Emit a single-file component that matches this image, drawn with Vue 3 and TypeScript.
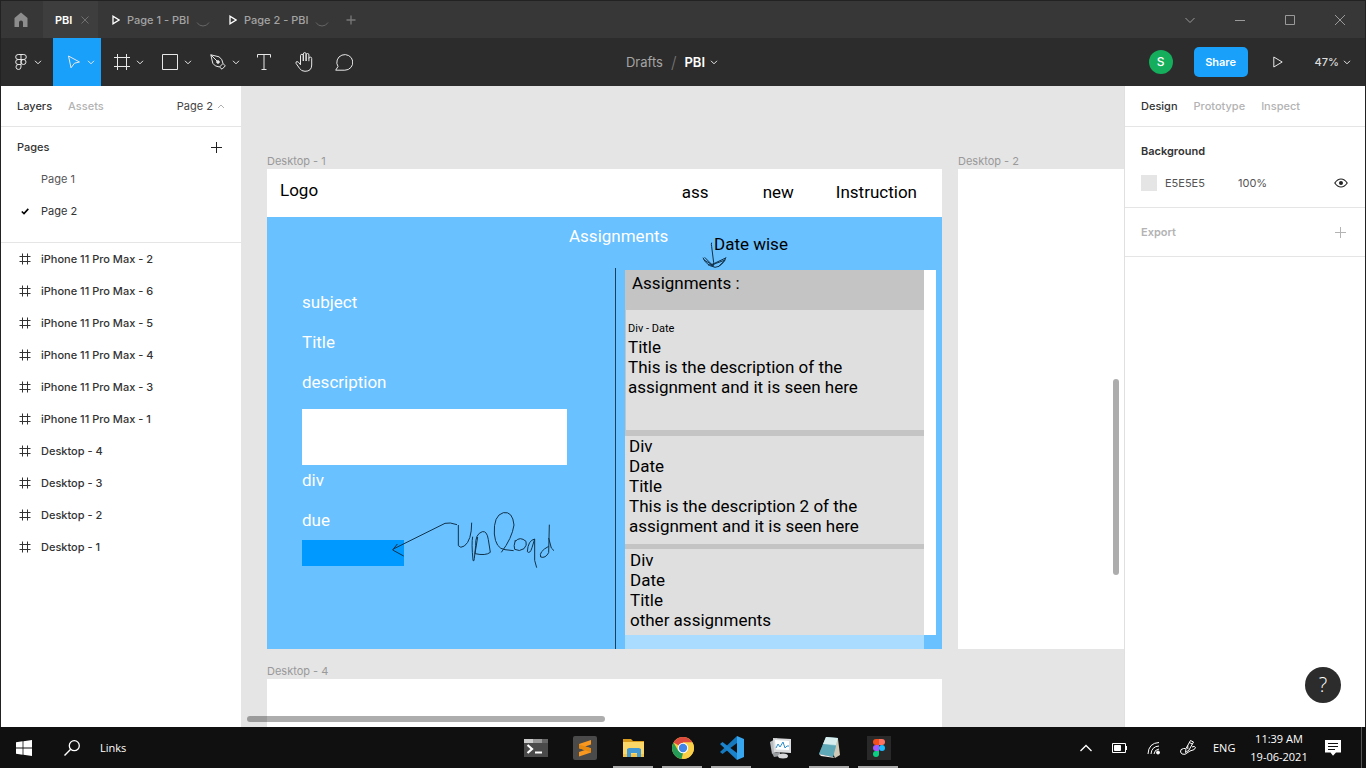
<script setup lang="ts">
import { ref } from 'vue'

interface Entry {
  lines: string[]
  small?: string
  kind: string
}

const fileTabs = ['Page 1 - PBI', 'Page 2 - PBI']
const pages = ['Page 1', 'Page 2']
const currentPage = ref('Page 2')

const layers = [
  'iPhone 11 Pro Max - 2',
  'iPhone 11 Pro Max - 6',
  'iPhone 11 Pro Max - 5',
  'iPhone 11 Pro Max - 4',
  'iPhone 11 Pro Max - 3',
  'iPhone 11 Pro Max - 1',
  'Desktop - 4',
  'Desktop - 3',
  'Desktop - 2',
  'Desktop - 1',
]

const inspectorTabs = ['Design', 'Prototype', 'Inspect']
const activeInspector = ref('Design')

const entries: Entry[] = [
  {
    kind: 'first',
    small: 'Div - Date',
    lines: ['Title', 'This is the description of the', 'assignment and it is seen here'],
  },
  {
    kind: 'second',
    lines: ['Div', 'Date', 'Title', 'This is the description 2 of the', 'assignment and it is seen here'],
  },
  { kind: 'third', lines: ['Div', 'Date', 'Title', 'other assignments'] },
]
</script>

<template>
  <div class="desktop">
    <div class="window">
      <header class="titlebar">
        <button class="home" aria-label="Home">
          <svg width="14" height="16" viewBox="0 0 14 16"><path d="M7 .5 13.5 6v9H9v-4.500a2 2 0 0 0-4 0V15H.5V6z" fill="#8d8d8d" /></svg>
        </button>
        <div class="tab active">
          <span>PBI</span>
          <button class="close" aria-label="Close tab">
            <svg width="8" height="8" viewBox="0 0 8 8"><path d="M.5.5l7 7M7.500.5l-7 7" stroke="#707070" fill="none" /></svg>
          </button>
        </div>
        <div v-for="t in fileTabs" :key="t" class="tab">
          <svg width="8" height="10" viewBox="0 0 8 10"><path d="M1 1.200v7.600L7 5z" stroke="#fff" stroke-width="1.300" fill="none" /></svg>
          <span>{{ t }}</span>
          <svg class="spin" width="14" height="14" viewBox="0 0 14 14"><path d="M1 9.500q2 3.500 6 3.500t6-3.500" stroke="#666" fill="none" /></svg>
        </div>
        <button class="newtab" aria-label="New tab">
          <svg width="10" height="10" viewBox="0 0 10 10"><path d="M5 .5v9M.5 5h9" stroke="#787878" stroke-width="1.300" /></svg>
        </button>
        <div class="controls">
          <button aria-label="More"><svg width="10" height="10" viewBox="0 0 10 10"><path d="M.5 3 5 7.500 9.500 3" /></svg></button>
          <button aria-label="Minimise"><svg width="10" height="10" viewBox="0 0 10 10"><path d="M0 5.500h10" /></svg></button>
          <button aria-label="Maximise"><svg width="10" height="10" viewBox="0 0 10 10"><path d="M.5.5h9v9h-9z" /></svg></button>
          <button aria-label="Close"><svg width="10" height="10" viewBox="0 0 10 10"><path d="M0 0l10 10M10 0 0 10" /></svg></button>
        </div>
      </header>

      <div class="toolbar">
        <nav class="tools" aria-label="Tools">
          <button class="tool menu" aria-label="Main menu">
            <svg width="12" height="16" viewBox="0 0 12 16"><path d="M6 .5H3.200a2.500 2.500 0 0 0 0 5H6zM6 .5h2.800a2.500 2.500 0 0 1 0 5H6M6 5.500H3.200a2.500 2.500 0 0 0 0 5H6zM6 10.500H3.200a2.500 2.500 0 1 0 2.800 2.500zM8.700 5.500a2.500 2.500 0 1 1-2.700 2.500 2.500 2.500 0 0 1 2.700-2.500z" /></svg>
            <svg class="chev" width="8" height="5" viewBox="0 0 8 5"><path d="M1 .8l3 3 3-3" /></svg>
          </button>
          <button class="tool active" aria-label="Move">
            <svg width="14" height="14" viewBox="0 0 14 14"><path d="M1.500 1 12.500 7 7.500 8.200 4 12.800z" /></svg>
            <svg class="chev" width="8" height="5" viewBox="0 0 8 5"><path d="M1 .8l3 3 3-3" /></svg>
          </button>
          <button class="tool" aria-label="Frame">
            <svg width="16" height="16" viewBox="0 0 16 16"><path d="M3.500 0v16M12.500 0v16M0 3.500h16M0 12.500h16" /></svg>
            <svg class="chev" width="8" height="5" viewBox="0 0 8 5"><path d="M1 .8l3 3 3-3" /></svg>
          </button>
          <button class="tool" aria-label="Rectangle">
            <svg width="16" height="16" viewBox="0 0 16 16"><path d="M.5.5h15v15H.5z" /></svg>
            <svg class="chev" width="8" height="5" viewBox="0 0 8 5"><path d="M1 .8l3 3 3-3" /></svg>
          </button>
          <button class="tool" aria-label="Pen">
            <svg width="16" height="16" viewBox="0 0 16 16"><path d="M.8.8 9 2.800q3.500 2 4 6.700l-3.500 3.500Q4.500 12.600 2.800 9.300zM.8.8l6.300 6.300M13 9.500l2.300 2.400-3.300 3.300L9.500 13" /><circle cx="8" cy="8" r="1.300" fill="#e8e8e8" /></svg>
            <svg class="chev" width="8" height="5" viewBox="0 0 8 5"><path d="M1 .8l3 3 3-3" /></svg>
          </button>
          <button class="tool narrow" aria-label="Text">
            <svg width="14" height="16" viewBox="0 0 14 16"><path d="M.5 3.500v-3h13v3M7 .5v15M4.500 15.500h5" /></svg>
          </button>
          <button class="tool narrow" aria-label="Hand">
            <svg width="18" height="20" viewBox="0 0 18 20"><path d="M5.500 11V3.700a1.400 1.400 0 0 1 2.800 0V9M8.300 9V2a1.400 1.400 0 0 1 2.800 0V9M11.100 9V2.900a1.400 1.400 0 0 1 2.800 0v6.300M13.900 6.500a1.400 1.400 0 0 1 2.800 0V13q0 6.300-6.700 6.300-3.800 0-5.500-3L1 11.300Q.6 9.800 2 9.500q1.300 0 3.500 3.300V9" /></svg>
          </button>
          <button class="tool narrow" aria-label="Comment">
            <svg width="18" height="17" viewBox="0 0 18 17"><path d="M.7 16.200 3 12.500A8 7.800 0 1 1 9.800 16.200z" /></svg>
          </button>
        </nav>
        <div class="filename">
          <a href="#">Drafts</a>
          <span class="slash">/</span>
          <button>PBI <svg class="chev" width="8" height="5" viewBox="0 0 8 5"><path d="M1 .8l3 3 3-3" /></svg></button>
        </div>
        <div class="actions">
          <span class="avatar">S</span>
          <button class="share">Share</button>
          <button class="play" aria-label="Present">
            <svg width="10" height="12" viewBox="0 0 10 12"><path d="M.8 1v10L9.200 6z" /></svg>
          </button>
          <button class="zoom">47% <svg class="chev" width="8" height="5" viewBox="0 0 8 5"><path d="M1 .8l3 3 3-3" /></svg></button>
        </div>
      </div>

      <div class="main">
        <aside class="left">
          <div class="panel-tabs">
            <button class="on">Layers</button>
            <button>Assets</button>
            <button class="pagepick">Page 2 <svg width="8" height="5" viewBox="0 0 8 5"><path d="M1 4l3-3 3 3" fill="none" stroke="#b0b0b0" /></svg></button>
          </div>
          <section class="pages">
            <div class="pages-head">
              <h2>Pages</h2>
              <button aria-label="Add page"><svg width="11" height="11" viewBox="0 0 11 11"><path d="M5.500 0v11M0 5.500h11" stroke="#222" /></svg></button>
            </div>
            <button v-for="p in pages" :key="p" class="page" :class="{ current: p === currentPage }" @click="currentPage = p">
              <span class="mark"><svg v-if="p === currentPage" width="8" height="7" viewBox="0 0 8 7"><path d="M.8 3.500 3 5.600 7.300.9" stroke="#000" stroke-width="1.600" fill="none" /></svg></span>
              {{ p }}
            </button>
          </section>
          <ul class="layers">
            <li v-for="l in layers" :key="l">
              <svg width="12" height="12" viewBox="0 0 12 12"><path d="M3.500.5v11M8.500.5v11M.5 3.500h11M.5 8.500h11" stroke="#333" /></svg>
              {{ l }}
            </li>
          </ul>
        </aside>

        <main class="canvas">
          <div class="node desk1">
            <div class="label">Desktop - 1</div>
            <div class="frame">
              <div class="site-head">
                <span class="logo">Logo</span>
                <span>ass</span>
                <span class="middle">new</span>
                <span>Instruction</span>
              </div>
              <div class="site-body">
                <div class="site-title">Assignments</div>
                <div class="cols">
                  <div class="form">
                    <p>subject</p>
                    <p>Title</p>
                    <p>description</p>
                    <div class="box"></div>
                    <p>div</p>
                    <p>due</p>
                    <div class="btn"></div>
                  </div>
                  <div class="listing">
                    <div class="list">
                      <div class="list-head">Assignments :</div>
                      <div v-for="e in entries" :key="e.kind" class="entry" :class="e.kind">
                        <p v-if="e.small" class="small">{{ e.small }}</p>
                        <p v-for="line in e.lines" :key="line">{{ line }}</p>
                      </div>
                    </div>
                    <div class="strip"></div>
                    <div class="tail"></div>
                  </div>
                </div>
              </div>
              <div class="note">Date wise</div>
              <svg class="arrow" viewBox="300 240 90 90">
                <path d="M335 248q-2 4 0 12l6 48-2 12M309 293q8 22 36 29 22-2 33-30M311 299l28 17M325 316l14-4 38-18M332 318l16-8 28-10-22 21M314 292l27 27" />
              </svg>
              <svg class="sketch" viewBox="330 360 510 180">
                <path d="M531 404l-20-5-16 1L340 477M352 462l-14 18 33 18M535 405v62q6 9 18 1 22-16 22-70M578 440q-4 20 1 70 2 8 4-5l4-38q-2-35 20-42 14-3 18 24l6 38q-14 11-46 4l8-50M664 487q32-42 38-82-4-42-32-37-30 8-27 64 4 44 32 47l26 3M706 450q-6 20-2 28 14 8 28-2 10-10 6-22-18-16-32 0M764 447q-20 4-22 38 8 8 14-12l8-26v64l6 22M808 404l-2 84q-10 18-24 13-6-16 24-32M806 444l8 30 8 8" />
              </svg>
            </div>
          </div>
          <div class="node desk2">
            <div class="label">Desktop - 2</div>
            <div class="frame"></div>
          </div>
          <div class="node desk4">
            <div class="label">Desktop - 4</div>
            <div class="frame"></div>
          </div>
          <div class="bar-h"></div>
          <div class="bar-v"></div>
        </main>

        <aside class="right">
          <div class="panel-tabs">
            <button v-for="t in inspectorTabs" :key="t" :class="{ on: t === activeInspector }" @click="activeInspector = t">{{ t }}</button>
          </div>
          <section class="background">
            <h2>Background</h2>
            <div class="fill">
              <span class="swatch"></span>
              <input class="hex" aria-label="Background colour" value="E5E5E5" />
              <input class="opacity" aria-label="Opacity" value="100%" />
              <button aria-label="Toggle visibility">
                <svg width="14" height="10" viewBox="0 0 14 10"><path d="M.8 5Q3.500 1 7 1t6.200 4Q10.500 9 7 9T.8 5z" fill="none" stroke="#222" stroke-width="1.200" /><circle cx="7" cy="5" r="2" fill="#222" /></svg>
              </button>
            </div>
          </section>
          <section class="export">
            <h2>Export</h2>
            <button aria-label="Add export"><svg width="11" height="11" viewBox="0 0 11 11"><path d="M5.500 0v11M0 5.500h11" stroke="#b3b3b3" /></svg></button>
          </section>
          <button class="help" aria-label="Help">?</button>
        </aside>
      </div>
    </div>

    <footer class="taskbar">
      <div class="start">
        <button aria-label="Start">
          <svg width="16" height="16" viewBox="0 0 16 16"><path d="M0 2.200 6.600 1.300v6.300H0zM7.400 1.200 16 0v7.600H7.400zM0 8.400h6.600v6.300L0 13.800zM7.400 8.400H16V16l-8.600-1.200z" fill="#fff" /></svg>
        </button>
        <button aria-label="Search">
          <svg width="16" height="16" viewBox="0 0 16 16"><circle cx="10.300" cy="5.700" r="5" fill="none" stroke="#fff" stroke-width="1.300" /><path d="M6.700 9.300.5 15.500" stroke="#fff" stroke-width="1.400" /></svg>
        </button>
        <span>Links</span>
      </div>
      <div class="apps">
        <button aria-label="Terminal">
          <svg width="24" height="24" viewBox="0 0 24 24"><path d="M0 3h24v18H0z" fill="#4a4a4a" /><path d="M0 3h9v4H0z" fill="#ccc" /><path d="M9 3h9v4H9z" fill="#999" /><path d="M18 3h6v4h-6z" fill="#666" /><path d="M3.500 9 8 13l-4.500 4" stroke="#fff" stroke-width="2.200" fill="none" /><path d="M11 16.500h7" stroke="#fff" stroke-width="2" /></svg>
        </button>
        <button aria-label="Sublime Text">
          <svg width="24" height="24" viewBox="0 0 24 24"><rect width="24" height="24" rx="2" fill="#4a4a4a" /><path d="M18 4v4.500l-6 2 6 1.800v4.200L6 20.500V16l6-2-6-1.800V8z" fill="#f89820" /><path d="M6 8.500v3.700l12 4v-3.900z" fill="#e8890f" /></svg>
        </button>
        <button class="open" aria-label="File Explorer">
          <svg width="24" height="24" viewBox="0 0 24 24"><path d="M1 3h8l2 2h11v4H1z" fill="#d99b1c" /><path d="M1 6h21v15H1z" fill="#fbd768" /><path d="M1 18h21v3H1z" fill="#f3c44a" /><path d="M5 21v-8l2-1h10l2 1v8h-4v-4H9v4z" fill="#4299d4" /></svg>
        </button>
        <button class="open" aria-label="Chrome">
          <svg width="24" height="24" viewBox="0 0 24 24"><circle cx="12" cy="12" r="11" fill="#f9cd3c" /><path d="M12 12 2.500 6.500A11 11 0 0 1 21.500 6.500H12z" fill="#dd4b3e" /><path d="M2.500 6.500 7.200 14.700 12 17l-1.500 6A11 11 0 0 1 2.500 6.500z" fill="#249b56" /><path d="M21.500 6.500H12l5 8-5 8.500a11 11 0 0 0 9.500-16.500z" fill="#fad04a" /><circle cx="12" cy="12" r="5.200" fill="#fff" /><circle cx="12" cy="12" r="4.200" fill="#4285e8" /></svg>
        </button>
        <button class="open" aria-label="Visual Studio Code">
          <svg width="24" height="24" viewBox="0 0 24 24"><path d="M17 0v7L2.500 18 0 16z" fill="#1678bd" /><path d="M0 8l2.500-2L17 17v7z" fill="#1b83cc" /><path d="M17 0l7 3v18l-7 3z" fill="#38a6ee" /></svg>
        </button>
        <button aria-label="Performance Monitor">
          <svg width="24" height="24" viewBox="0 0 24 24"><path d="M1 6l7-4 2 13-7 3z" fill="#b9bdc0" /><path d="M4 2 22 3v14l-17-1z" fill="#dadcdd" /><path d="M6 4l14 1v9L7 13.500z" fill="#fff" /><path d="M7 12l2-4 2 3 3-5 2 6 2-2h2" stroke="#2e8fce" fill="none" /><path d="M3 17l8-1v4l-6 1z" fill="#9a9da0" /><ellipse cx="14" cy="20" rx="5" ry="2.500" fill="#d5d6d7" /></svg>
        </button>
        <button class="open" aria-label="Notepad">
          <svg width="24" height="24" viewBox="0 0 24 24"><path d="M8 2l12 1 2 16-5 3z" fill="#cfc9b6" /><path d="M8 1l12 1-5 19-14-3z" fill="#84bfcb" /><path d="M8 1l12 1-2 7-13-1z" fill="#d8eeee" /><path d="M5 8l13 2-3 11-14-3z" fill="#4c9bac" opacity=".65" /><path d="M1 18l14 3 2 1-14-2z" fill="#eee" /></svg>
        </button>
        <button class="open" aria-label="Figma">
          <svg width="24" height="24" viewBox="0 0 24 24"><rect width="24" height="24" fill="#292929" /><path d="M12 3H9a3 3 0 0 0 0 6h3z" fill="#f24e1e" /><path d="M12 3h3a3 3 0 0 1 0 6h-3z" fill="#ff7262" /><path d="M12 9H9a3 3 0 0 0 0 6h3z" fill="#a259ff" /><circle cx="15" cy="12" r="3" fill="#1abcfe" /><path d="M12 15H9a3 3 0 1 0 3 3z" fill="#0acf83" /></svg>
        </button>
      </div>
      <div class="tray">
        <button aria-label="Show hidden icons"><svg width="12" height="8" viewBox="0 0 12 8"><path d="M.5 7 6 1.500 11.500 7" stroke-width="1.300" /></svg></button>
        <button aria-label="Battery"><svg width="16" height="10" viewBox="0 0 16 10"><path d="M.5.500h13v9H.5zM14.500 3v4" /><path d="M2.500 2.500h6v5h-6z" fill="#fff" /></svg></button>
        <button aria-label="Network"><svg width="14" height="14" viewBox="0 0 14 14"><path d="M1 13Q1.500 2 12 1.500M4 13q.5-7.500 8-8M7 13q.5-4.500 5-5" /><circle cx="11" cy="11.500" r="1.500" fill="#fff" /></svg></button>
        <button aria-label="Pen input"><svg width="18" height="17" viewBox="0 0 18 17"><path d="M6.500 13.500 7 9.500 11.500 1.500l3 1.500-4.500 8zM10.300 3.500l3 1.500M8.800 10V6.500M6.500 9.500H4.500Q1 10 1.500 13q1 3 4.500 2.300l5-3.300Q16.500 11 16.500 8.500q-1-2-3.500-.5" /></svg></button>
        <span class="lang">ENG</span>
        <span class="clock">11:39 AM<br />19-06-2021</span>
        <button class="notif" aria-label="Notifications"><svg width="16" height="16" viewBox="0 0 16 16"><path d="M0 0h16v12.500h-5L8 15.800 5.500 12.500H0z" fill="#fff" stroke="none" /><path d="M3 3.500h10M3 6.500h10M3 9.500h7" stroke="#101010" /></svg></button>
        <span class="edge"></span>
      </div>
    </footer>
  </div>
</template>

<style>
body {
  overflow: hidden;
  background: #101010;
}
</style>

<style scoped>
.desktop {
  height: 100vh;
  display: flex;
  flex-direction: column;
  font: 500 11px/16px Inter, "Liberation Sans", sans-serif;
  color: #333;
}
.desktop * {
  box-sizing: border-box;
}
button,
input {
  font: inherit;
  color: inherit;
  background: none;
  border: 0;
  padding: 0;
  margin: 0;
}
button {
  display: flex;
  align-items: center;
  justify-content: center;
}
svg {
  flex: none;
  display: block;
}
h2,
p,
ul {
  margin: 0;
  padding: 0;
  font: inherit;
}
.window {
  flex: 1;
  min-height: 0;
  display: flex;
  flex-direction: column;
  border: 1px solid #222;
  border-bottom: 0;
}

/* title bar */
.titlebar {
  flex: none;
  height: 37px;
  display: flex;
  align-items: stretch;
  background: #373737;
  color: #a3a3a3;
}
.home {
  width: 42px;
  padding-right: 2px;
}
.tab {
  display: flex;
  align-items: center;
  padding-left: 14px;
  white-space: nowrap;
}
.tab.active {
  width: 55px;
  padding-left: 12px;
  gap: 9px;
  background: #3e3e3e;
  color: #fff;
  font-weight: 600;
}
.tab:not(.active) {
  gap: 7px;
  width: 117px;
}
.newtab {
  width: 10px;
  margin-left: 14px;
}
.controls {
  margin-left: auto;
  display: flex;
}
.controls button {
  width: 50px;
}
.controls svg {
  stroke: #9a9a9a;
  fill: none;
}

/* toolbar */
.toolbar {
  flex: none;
  height: 48px;
  display: grid;
  grid-template-columns: 1fr auto 1fr;
  background: #2c2c2c;
  color: #fff;
}
.toolbar svg {
  stroke: #e8e8e8;
  fill: none;
}
.tools {
  display: flex;
}
.tool {
  width: 48px;
  gap: 6px;
  padding-left: 8px;
}
.tool.menu {
  width: 52px;
  gap: 7px;
  padding: 0 0 0 2px;
}
.tool.active {
  background: #18a0fb;
}
.tool.narrow {
  width: 40px;
  padding: 0 2px 0 0;
}
.filename {
  display: flex;
  align-items: center;
  gap: 8px;
  font-size: 13px;
  padding-right: 22px;
}
.filename a {
  color: #a5a5a5;
  font-weight: 400;
  text-decoration: none;
}
.slash {
  font-size: 16px;
  font-weight: 300;
  color: #777;
}
.filename button {
  font-weight: 600;
  gap: 5px;
}
.actions {
  display: flex;
  align-items: center;
  justify-content: flex-end;
  padding-right: 14px;
}
.avatar {
  width: 24px;
  height: 24px;
  border-radius: 50%;
  background: #14ae5c;
  line-height: 24px;
  text-align: center;
  font-size: 12px;
}
.share {
  height: 30px;
  width: 54px;
  margin-left: 21px;
  border-radius: 5px;
  background: #18a0fb;
  font-weight: 600;
}
.play {
  width: 60px;
}
.zoom {
  gap: 4px;
  margin-left: 7px;
  color: #ddd;
}

/* side panels */
.main {
  flex: 1;
  min-height: 0;
  display: flex;
}
.left,
.right {
  flex: none;
  width: 240px;
  background: #fff;
}
.right {
  width: 241px;
  border-left: 1px solid #e0e0e0;
  display: flex;
  flex-direction: column;
}
.panel-tabs {
  display: flex;
  gap: 16px;
  height: 41px;
  padding: 0 16px;
  border-bottom: 1px solid #e5e5e5;
  color: #b3b3b3;
}
.panel-tabs .on {
  color: #333;
}
.panel-tabs .pagepick {
  margin-left: auto;
  color: #444;
  font-weight: 400;
  gap: 4px;
}
.pages {
  padding: 4px 0 15px;
  border-bottom: 1px solid #e5e5e5;
}
.pages-head {
  height: 32px;
  display: flex;
  align-items: center;
  justify-content: space-between;
  padding: 0 19px 0 16px;
}
.page {
  width: 100%;
  height: 32px;
  justify-content: flex-start;
  font-weight: 400;
  color: #555;
}
.page.current {
  color: #333;
}
.mark {
  width: 40px;
  padding-left: 20px;
}
.layers {
  list-style: none;
}
.layers li {
  height: 32px;
  display: flex;
  align-items: center;
  gap: 10px;
  padding-left: 18px;
}
.background {
  padding: 8px 16px;
  border-bottom: 1px solid #e5e5e5;
}
.background h2 {
  line-height: 32px;
  font-weight: 600;
}
.fill {
  height: 32px;
  display: flex;
  align-items: center;
  font-weight: 400;
  color: #555;
}
.swatch {
  width: 16px;
  height: 16px;
  margin-right: 8px;
  background: #e5e5e5;
}
.hex {
  width: 73px;
}
.opacity {
  width: 60px;
}
.fill button {
  margin-left: auto;
  margin-right: 1px;
}
.export {
  height: 49px;
  display: flex;
  align-items: center;
  justify-content: space-between;
  padding: 0 19px 0 16px;
  border-bottom: 1px solid #e5e5e5;
  color: #b3b3b3;
}
.export h2 {
  font-weight: 600;
}
.help {
  width: 36px;
  height: 36px;
  margin: auto 24px 24px auto;
  border-radius: 50%;
  background: #2c2c2c;
  color: #fff;
  font: 300 20px/20px "Open Sans", sans-serif;
}

/* canvas */
.canvas {
  flex: 1;
  min-width: 0;
  position: relative;
  overflow: hidden;
  background: #e5e5e5;
}
.node {
  position: absolute;
  width: 675px;
}
.desk1 {
  left: 26px;
  top: 65px;
}
.desk2 {
  left: 717px;
  top: 65px;
}
.desk4 {
  left: 26px;
  top: 575px;
}
.label {
  height: 18px;
  line-height: 20px;
  font-weight: 400;
  color: #999;
}
.frame {
  position: relative;
  height: 480px;
  display: flex;
  flex-direction: column;
  background: #fff;
  font: 17px/20px Roboto, "Liberation Sans", sans-serif;
  color: #000;
}
.site-head {
  flex: none;
  height: 48px;
  display: flex;
  align-items: center;
  padding: 0 25px 2px 13px;
}
.logo {
  margin-right: auto;
  padding-bottom: 4px;
}
.middle {
  margin: 0 42px 0 54px;
}
.site-body {
  flex: 1;
  display: flex;
  flex-direction: column;
  background: #69c1ff;
}
.site-title {
  height: 51px;
  padding: 9px 0 0 302px;
  color: #fff;
}
.cols {
  flex: 1;
  display: flex;
}
.form {
  width: 349px;
  padding: 24px 0 0 35px;
  border-right: 1px solid #17415f;
  color: #fff;
}
.form p {
  margin-bottom: 20px;
}
.form .box {
  width: 265px;
  height: 56px;
  margin: -3px 0 5px;
  background: #fff;
}
.form .btn {
  width: 102px;
  height: 26px;
  margin-top: -10px;
  background: #0099ff;
}
.listing {
  flex: 1;
  display: grid;
  grid-template: 1fr 14px / 1fr 12px;
  padding: 2px 6px 0 9px;
}
.list {
  background: #c4c4c4;
}
.list-head {
  height: 40px;
  padding: 3px 0 0 7px;
}
.entry {
  background: #dfdfdf;
}
.first {
  height: 120px;
  margin: 0 0 6px 1px;
  padding: 9px 0 0 2px;
}
.small {
  font-size: 11px;
}
.first .small {
  line-height: 20px;
  margin-bottom: -2px;
}
.second {
  height: 108px;
  margin-bottom: 5px;
  padding: 0 0 0 4px;
}
.third {
  height: 86px;
  padding: 1px 0 0 5px;
}
.strip {
  background: #fff;
}
.tail {
  background: #a9dcff;
}
.note {
  position: absolute;
  left: 447px;
  top: 65px;
}
.arrow,
.sketch {
  position: absolute;
  fill: none;
  stroke: #12324a;
  stroke-width: 3;
}
.arrow {
  left: 433px;
  top: 71px;
  width: 30px;
  height: 30px;
}
.sketch {
  left: 123px;
  top: 341px;
  width: 170px;
  height: 60px;
}
.bar-h,
.bar-v {
  position: absolute;
  border-radius: 3px;
  background: rgba(0, 0, 0, 0.32);
}
.bar-h {
  left: 6px;
  bottom: 5px;
  width: 358px;
  height: 6px;
}
.bar-v {
  right: 5px;
  top: 293px;
  width: 6px;
  height: 196px;
}

/* taskbar */
.taskbar {
  flex: none;
  height: 41px;
  display: flex;
  background: #101010;
  color: #fff;
  font: 400 11px/18px "Open Sans", "Noto Sans", sans-serif;
}
.start {
  flex: 0 0 511px;
  display: flex;
  align-items: center;
}
.start button {
  width: 48px;
  height: 100%;
}
.start button + button {
  width: 52px;
  padding-right: 4px;
}
.apps {
  display: flex;
}
.apps button {
  width: 49px;
  position: relative;
}
.apps .open::after {
  content: "";
  position: absolute;
  left: 4px;
  right: 5px;
  bottom: 0;
  height: 2px;
  background: #aaa;
}
.tray {
  margin-left: auto;
  display: flex;
  align-items: center;
}
.tray svg {
  fill: none;
  stroke: #fff;
}
.tray button {
  width: 34px;
  height: 100%;
}
.lang {
  width: 42px;
  padding-left: 8px;
}
.clock {
  width: 64px;
  text-align: center;
}
.tray .notif {
  width: 50px;
  padding-right: 6px;
}
.edge {
  width: 5px;
  height: 100%;
  border-left: 1px solid #555;
}
</style>
